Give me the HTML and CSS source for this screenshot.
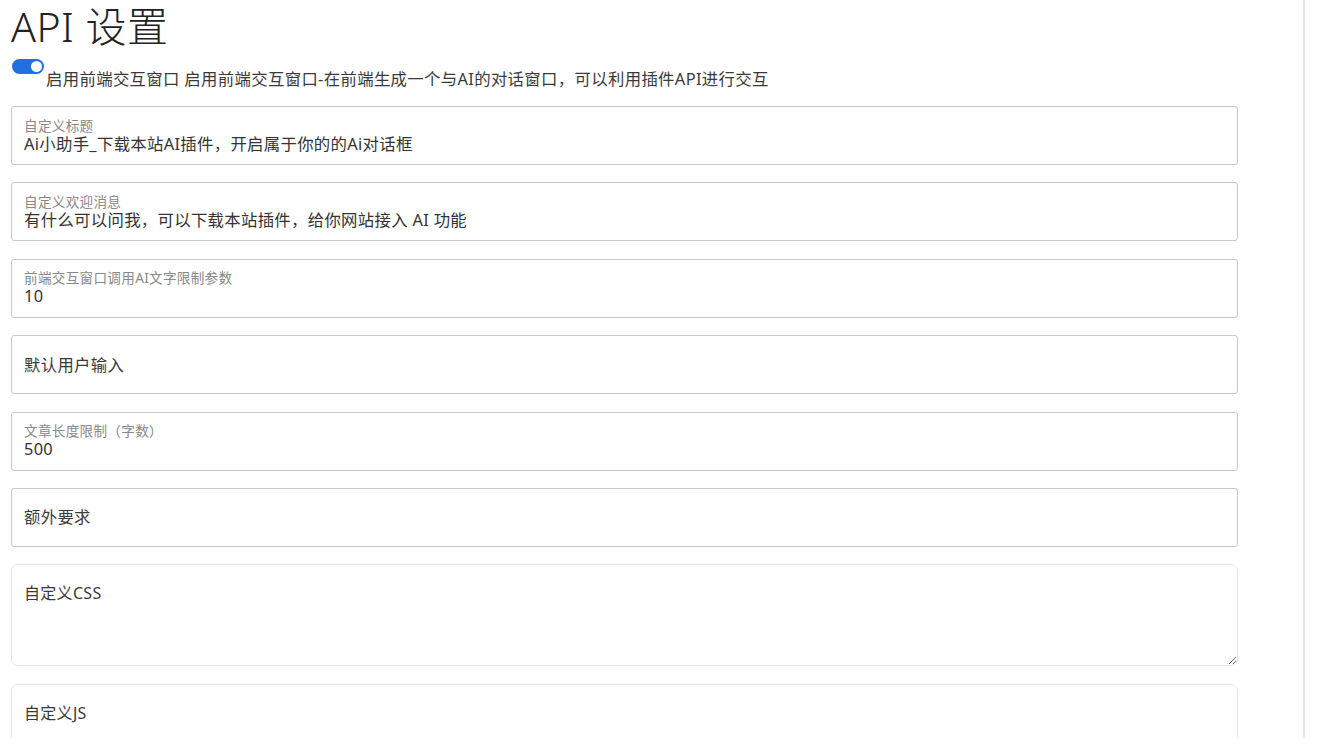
FILE: index.html
```html
<!DOCTYPE html>
<html lang="zh-CN">
<head>
    <meta charset="UTF-8">
    <meta name="viewport" content="width=device-width, initial-scale=1.0">
    <title>API 设置</title>
    <link rel="stylesheet" href="styles.css">
</head>
<body>
    <div class="page">
        <h1>API 设置</h1>

        <div class="switch-row">
            <input type="checkbox" id="enableChat" class="switch" checked>
            <label for="enableChat" class="switch-label">启用前端交互窗口 启用前端交互窗口-在前端生成一个与AI的对话窗口，可以利用插件API进行交互</label>
        </div>

        <form class="settings">
            <div class="field">
                <label for="chatTitle">自定义标题</label>
                <input type="text" id="chatTitle" value="Ai小助手_下载本站AI插件，开启属于你的的Ai对话框">
            </div>

            <div class="field">
                <label for="welcome">自定义欢迎消息</label>
                <input type="text" id="welcome" value="有什么可以问我，可以下载本站插件，给你网站接入 AI 功能">
            </div>

            <div class="field">
                <label for="limit">前端交互窗口调用AI文字限制参数</label>
                <input type="text" id="limit" value="10">
            </div>

            <div class="field empty">
                <input type="text" id="userInput" placeholder="默认用户输入">
            </div>

            <div class="field">
                <label for="length">文章长度限制（字数）</label>
                <input type="text" id="length" value="500">
            </div>

            <div class="field empty">
                <input type="text" id="extra" placeholder="额外要求">
            </div>

            <textarea class="code-box" placeholder="自定义CSS"></textarea>
            <textarea class="code-box" placeholder="自定义JS"></textarea>
        </form>
    </div>
</body>
</html>
```

FILE: styles.css
```css
html, body {
    margin: 0;
    height: 100%;
    overflow: hidden;
}

body {
    font-family: "Noto Sans", "Noto Sans CJK SC", sans-serif;
    background-color: #fff;
    color: #333;
}

.page {
    width: 1292px;
    height: 100%;
    padding-left: 11px;
    border-right: 2px solid #e4e4e4;
}

h1 {
    margin: 0;
    padding-top: 2px;
    font-size: 41px;
    font-weight: 300;
    letter-spacing: 0.5px;
    line-height: 48px;
    color: #222;
}

.switch-row {
    display: flex;
    align-items: flex-start;
    margin-top: 9px;
    height: 47px;
}

.switch {
    appearance: none;
    width: 32px;
    height: 15px;
    margin: 0 0 0 1px;
    border-radius: 8px;
    background-color: #1f6fe0;
    position: relative;
    flex: none;
}

.switch::after {
    content: "";
    position: absolute;
    right: 2px;
    top: 2px;
    width: 11px;
    height: 11px;
    border-radius: 50%;
    background: #fff;
}

.switch-label {
    margin-left: 2px;
    padding-top: 10px;
    font-size: 16.4px;
    letter-spacing: 0.33px;
    line-height: 20px;
    color: #3a3a3a;
}

.settings {
    display: flex;
    flex-direction: column;
    gap: 17.4px;
    width: 1227px;
}

.field {
    box-sizing: border-box;
    height: 59px;
    border: 1px solid #c8c8c8;
    border-radius: 3px;
    padding: 0 12px;
    display: flex;
    flex-direction: column;
    justify-content: center;
}

.field label {
    font-size: 13.6px;
    letter-spacing: 0.3px;
    line-height: 16px;
    color: #888;
}

.field input {
    border: none;
    outline: none;
    padding: 0;
    margin: 0;
    font-family: inherit;
    font-size: 16.4px;
    letter-spacing: 0.3px;
    line-height: 20px;
    height: 20px;
    color: #333;
    background: transparent;
}

.field.empty input::placeholder,
.code-box::placeholder {
    color: #3a3a3a;
    opacity: 1;
}

.code-box {
    box-sizing: border-box;
    width: 1227px;
    height: 102px;
    flex: none;
    border: 1px solid #e4e4e4;
    border-radius: 7px;
    padding: 16px 12px;
    font-family: inherit;
    font-size: 16px;
    letter-spacing: 0.3px;
    line-height: 24px;
    resize: vertical;
    outline: none;
}
```
